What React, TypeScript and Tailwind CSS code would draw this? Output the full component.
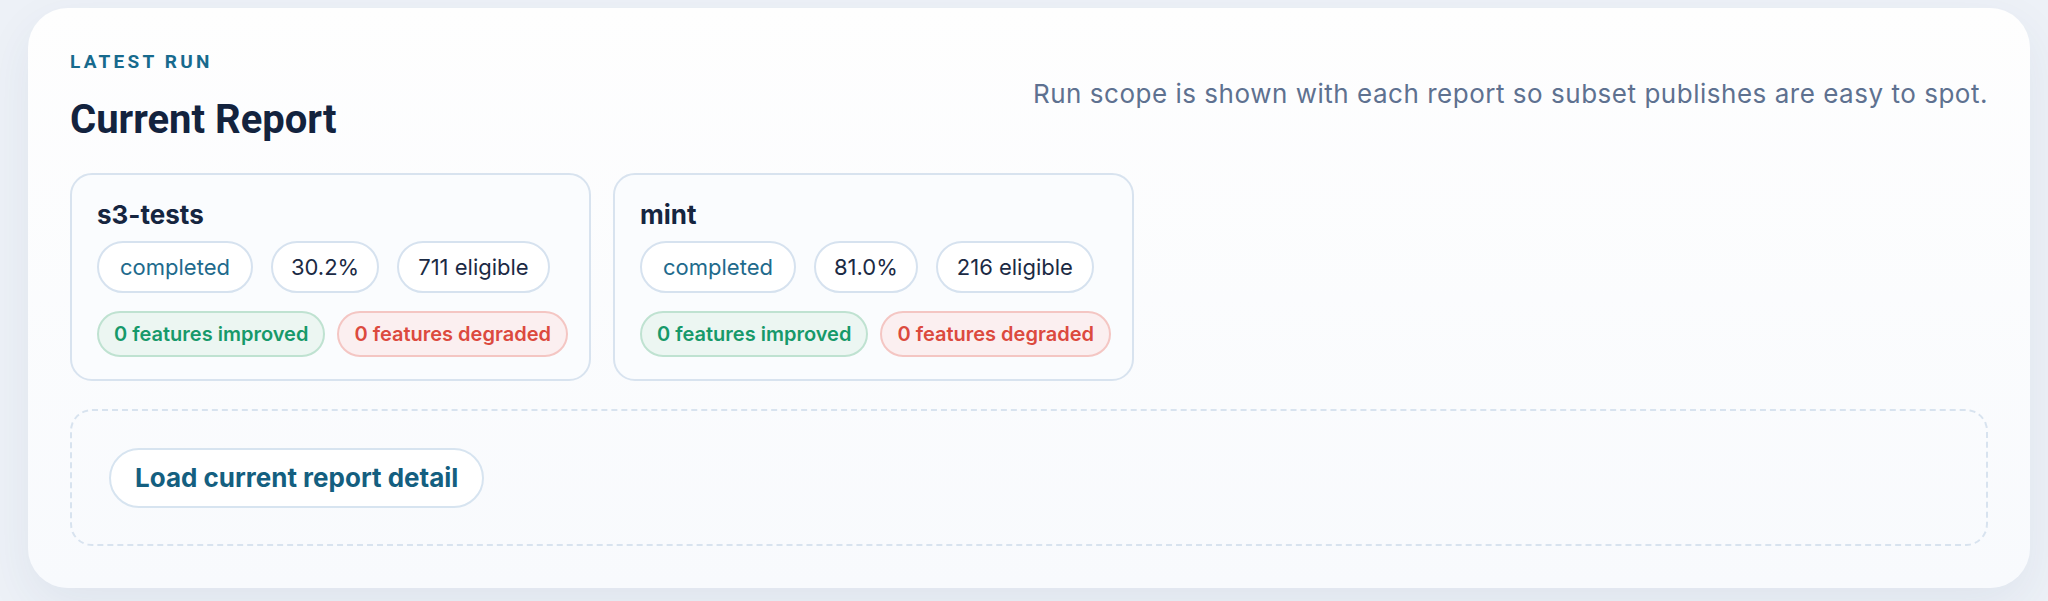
import React from 'react';

interface RunSummary {
  suite: string;
  status: string;
  passRate: string;
  eligible: number;
  improved: number;
  degraded: number;
}

const runs: RunSummary[] = [
  { suite: 's3-tests', status: 'completed', passRate: '30.2%', eligible: 711, improved: 0, degraded: 0 },
  { suite: 'mint', status: 'completed', passRate: '81.0%', eligible: 216, improved: 0, degraded: 0 },
];

function Pill({ children, className }: { children: React.ReactNode; className: string }) {
  return (
    <span className={`inline-flex items-center rounded-full border-2 whitespace-nowrap ${className}`}>
      {children}
    </span>
  );
}

function RunCard({ run }: { run: RunSummary }) {
  return (
    <div className="w-[521px] rounded-[22px] border-2 border-[#d8e3ef] bg-[#fafcfe] px-[25px] pt-[24px] pb-[22px]">
      <h3 className="text-[26px] leading-[32px] font-bold text-[#152540]">{run.suite}</h3>
      <div className="mt-[10px] flex gap-[18px]">
        <Pill className="border-[#d6e2ef] bg-white px-[21px] py-[10px] text-[22px] leading-[28px] text-[#216a8c]">
          {run.status}
        </Pill>
        <Pill className="border-[#d6e2ef] bg-white px-[18px] py-[10px] text-[22px] leading-[28px] text-[#1b2a44]">
          {run.passRate}
        </Pill>
        <Pill className="border-[#d6e2ef] bg-white px-[19px] py-[10px] text-[22px] leading-[28px] text-[#1b2a44]">
          {run.eligible} eligible
        </Pill>
      </div>
      <div className="mt-[18px] flex gap-[12px]">
        <Pill className="border-[#bfe2d1] bg-[#ecf6f2] px-[15px] py-[9px] text-[20px] leading-[24px] font-semibold text-[#17996a]">
          {run.improved} features improved
        </Pill>
        <Pill className="border-[#f4c6c3] bg-[#fbeff0] px-[15px] py-[9px] text-[20px] leading-[24px] font-semibold text-[#dc4a3e]">
          {run.degraded} features degraded
        </Pill>
      </div>
    </div>
  );
}

export default function App() {
  return (
    <div
      className="h-[601px] bg-[#edf1f7] pt-[8px] pl-[28px] pr-[18px] pb-[13px]"
      style={{ fontFamily: 'Inter, "Noto Sans", sans-serif' }}
    >
      <section className="rounded-[40px] bg-gradient-to-b from-[#fefefe] to-[#f8fafd] px-[42px] pt-[42px] pb-[42px] shadow-[0_18px_50px_rgba(40,70,120,0.07)]">
        <div className="flex items-center justify-between">
          <div>
            <div
              className="text-[19px] leading-[24px] font-bold uppercase tracking-[0.17em] text-[#176a8d]"
              style={{ fontFamily: 'Roboto, sans-serif' }}
            >
              Latest Run
            </div>
            <h2
              className="mt-[22px] text-[40px] leading-[48px] font-bold text-[#13233e]"
              style={{ fontFamily: 'Roboto, sans-serif' }}
            >
              Current Report
            </h2>
          </div>
          <p className="pb-[6px] text-[26px] leading-[34px] tracking-[0.02em] text-[#5e7190]">
            Run scope is shown with each report so subset publishes are easy to spot.
          </p>
        </div>

        <div className="mt-[29px] flex gap-[22px]">
          {runs.map((run) => (
            <RunCard key={run.suite} run={run} />
          ))}
        </div>

        <div className="mt-[28px] rounded-[22px] border-2 border-dashed border-[#d8e3ef] px-[37px] pt-[37px] pb-[36px]">
          <button className="rounded-full border-2 border-[#d7e4f0] bg-white px-[24px] py-[12px] text-[26px] leading-[32px] font-bold text-[#145f80]">
            Load current report detail
          </button>
        </div>
      </section>
    </div>
  );
}
